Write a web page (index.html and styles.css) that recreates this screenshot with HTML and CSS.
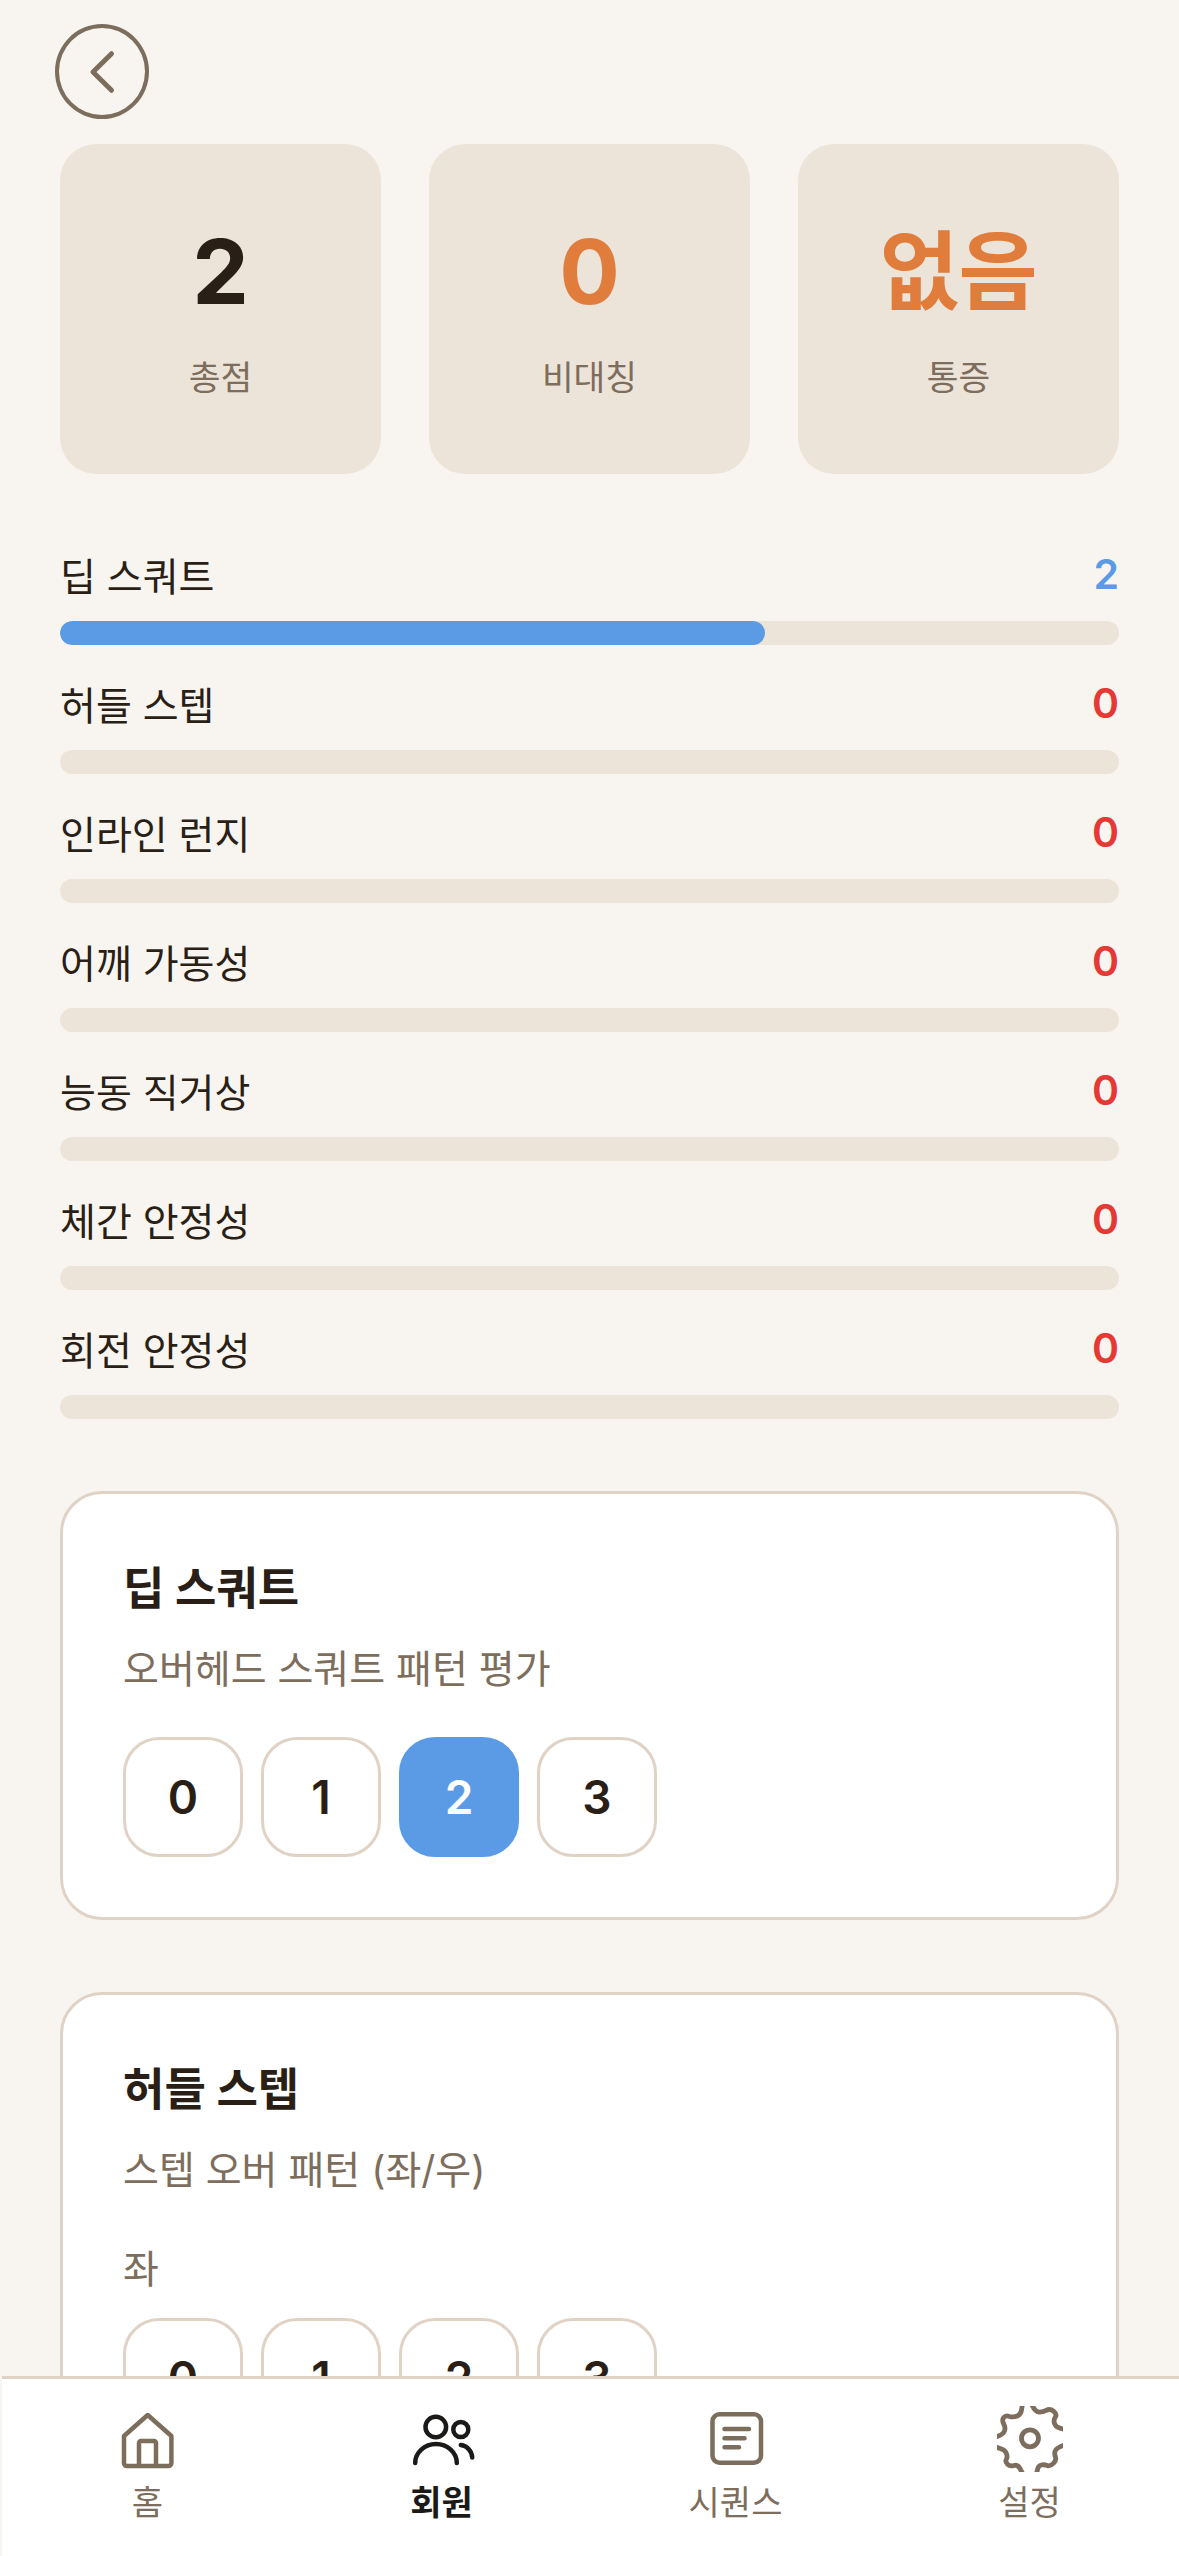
FILE: index.html
```html
<!DOCTYPE html>
<html lang="ko">
<head>
    <meta charset="UTF-8">
    <meta name="viewport" content="width=device-width, initial-scale=1.0">
    <title>FMS 평가</title>
    <link rel="stylesheet" href="styles.css">
</head>
<body>

    <div class="screen">
        <main class="content">
            <button class="back-button">
                <svg viewBox="0 0 24 24" width="60" height="60" fill="none" stroke="#7d6d5c" stroke-width="2" stroke-linecap="round" stroke-linejoin="round"><path d="M15.8 4.7L8.4 12l7.4 7.3"/></svg>
            </button>

            <div class="summary">
                <div class="summary-card">
                    <div class="summary-value">2</div>
                    <div class="summary-label">총점</div>
                </div>
                <div class="summary-card">
                    <div class="summary-value orange">0</div>
                    <div class="summary-label">비대칭</div>
                </div>
                <div class="summary-card">
                    <div class="summary-value orange korean">없음</div>
                    <div class="summary-label">통증</div>
                </div>
            </div>

            <div class="score-list">
                <div class="score-row">
                    <div class="score-head"><span>딥 스쿼트</span><span class="score-num blue">2</span></div>
                    <div class="bar"><div class="bar-fill" style="width: 66.6%"></div></div>
                </div>
                <div class="score-row">
                    <div class="score-head"><span>허들 스텝</span><span class="score-num red">0</span></div>
                    <div class="bar"></div>
                </div>
                <div class="score-row">
                    <div class="score-head"><span>인라인 런지</span><span class="score-num red">0</span></div>
                    <div class="bar"></div>
                </div>
                <div class="score-row">
                    <div class="score-head"><span>어깨 가동성</span><span class="score-num red">0</span></div>
                    <div class="bar"></div>
                </div>
                <div class="score-row">
                    <div class="score-head"><span>능동 직거상</span><span class="score-num red">0</span></div>
                    <div class="bar"></div>
                </div>
                <div class="score-row">
                    <div class="score-head"><span>체간 안정성</span><span class="score-num red">0</span></div>
                    <div class="bar"></div>
                </div>
                <div class="score-row">
                    <div class="score-head"><span>회전 안정성</span><span class="score-num red">0</span></div>
                    <div class="bar"></div>
                </div>
            </div>

            <section class="test-card">
                <h2>딥 스쿼트</h2>
                <p class="test-desc">오버헤드 스쿼트 패턴 평가</p>
                <div class="options">
                    <button class="option">0</button>
                    <button class="option">1</button>
                    <button class="option selected">2</button>
                    <button class="option">3</button>
                </div>
            </section>

            <section class="test-card">
                <h2>허들 스텝</h2>
                <p class="test-desc">스텝 오버 패턴 (좌/우)</p>
                <p class="side-label">좌</p>
                <div class="options">
                    <button class="option">0</button>
                    <button class="option">1</button>
                    <button class="option">2</button>
                    <button class="option">3</button>
                </div>
            </section>
        </main>

        <nav class="tab-bar">
            <div class="tab">
                <svg class="tab-icon" viewBox="0 0 66 66" fill="none" stroke="#7d6d5c" stroke-width="4.5" stroke-linejoin="round"><path d="M32.7 9L9 30v27a3 3 0 0 0 3 3h41.4a3 3 0 0 0 3-3V30z"/><path d="M24 60V37a2 2 0 0 1 2-2h13a2 2 0 0 1 2 2v23"/></svg>
                <span>홈</span>
            </div>
            <div class="tab active">
                <svg class="tab-icon" viewBox="0 0 66 66" fill="none" stroke="#1c1a18" stroke-width="4.5" stroke-linecap="round"><circle cx="26.8" cy="21" r="10.3"/><circle cx="51.8" cy="23.5" r="7.5"/><path d="M6.2 57A20.8 19 0 0 1 47.8 57"/><path d="M51.8 39A13 13 0 0 1 63.2 51.5"/></svg>
                <span>회원</span>
            </div>
            <div class="tab">
                <svg class="tab-icon" viewBox="0 0 66 66" fill="none" stroke="#7d6d5c" stroke-width="4.5" stroke-linecap="round"><rect x="9.5" y="8.25" width="48.5" height="48.5" rx="7"/><path d="M21.5 23H46M21.5 32.3H41.5M21.5 41.3H36"/></svg>
                <span>시퀀스</span>
            </div>
            <div class="tab">
                <svg class="tab-icon" viewBox="0 0 66 66" fill="none" stroke="#7d6d5c" stroke-width="4.8" stroke-linecap="round" stroke-linejoin="round">
                    <circle cx="33" cy="32.3" r="8.5"/>
                    <path d="M25.3-1L24.6 3.6Q24 8.3 20.2 10Q16.3 11.7 12.5 10.4Q8.7 9 6.7 11.5Q4.7 14 6.7 17.9Q8.7 21.7 7.5 25Q6.3 28.3-.3 30.7"/>
                    <path d="M-.3 41.3L3.9 42.7Q8 44 9.4 47.4Q10.7 50.7 9.4 53.2Q8 55.7 10.5 58.2Q13 60.7 16.9 59.5Q20.7 58.3 23 62.7L25.3 67"/>
                    <path d="M39.7 67L40.5 63.4Q41.3 59.7 44.3 59Q47.3 58.3 50.2 59.5Q53 60.7 56.4 57.4Q59.7 54 58.4 50.7Q57 47.3 58.4 44.5Q59.7 41.7 67.3 39"/>
                    <path d="M67.3 23.3L63 22.2Q58.7 21 57.5 17.5Q56.3 14 58.3 11.2Q60.3 8.3 56.7 5.3Q53 2.3 49.2 4.3Q45.3 6.3 41.7 6Q38 5.7 34.7-1.7"/>
                </svg>
                <span>설정</span>
            </div>
        </nav>
    </div>

</body>
</html>
```

FILE: styles.css
```css
* {
    box-sizing: border-box;
}
html, body {
    margin: 0;
    padding: 0;
}
body {
    font-family: Inter, "Noto Sans CJK KR", sans-serif;
    background-color: #f8f5f0;
    color: #2a1f16;
}
button {
    font-family: inherit;
}
.screen {
    position: relative;
    width: 1179px;
    height: 2556px;
    overflow: hidden;
}
.content {
    padding: 24px 60px 0;
}
.back-button {
    display: flex;
    align-items: center;
    justify-content: center;
    width: 94px;
    height: 95px;
    margin-left: -5px;
    padding: 0;
    background: none;
    border: 4px solid #7d6d5c;
    border-radius: 50%;
}
.summary {
    display: grid;
    grid-template-columns: repeat(3, 1fr);
    gap: 48px;
    margin-top: 25px;
}
.summary-card {
    display: flex;
    flex-direction: column;
    align-items: center;
    height: 330px;
    padding-top: 78px;
    background-color: #ede4d9;
    border-radius: 36px;
}
.summary-value {
    font-size: 90px;
    font-weight: 700;
    line-height: 100px;
}
.summary-value.korean {
    font-size: 86px;
}
.summary-label {
    margin-top: 32px;
    font-size: 34.5px;
    line-height: 48px;
    color: #7d6d5c;
}
.orange {
    color: #e07d3c;
}
.score-list {
    display: flex;
    flex-direction: column;
    gap: 11px;
    margin-top: 53px;
}
.score-head {
    display: flex;
    justify-content: space-between;
    align-items: center;
    height: 94px;
    font-size: 39px;
}
.score-num {
    font-size: 41px;
    font-weight: 600;
}
.blue {
    color: #5b9be6;
}
.red {
    color: #e53935;
}
.bar {
    height: 24px;
    background-color: #ede4d9;
    border-radius: 12px;
    overflow: hidden;
}
.bar-fill {
    height: 100%;
    background-color: #5b9be6;
    border-radius: 12px;
}
.test-card {
    margin-top: 72px;
    padding: 60px;
    background-color: #fff;
    border: 3px solid #e0d3c6;
    border-radius: 42px;
}
.test-card h2 {
    margin: 0;
    font-size: 45px;
    font-weight: 700;
    line-height: 70px;
}
.test-desc {
    margin: 18px 0 0;
    font-size: 39px;
    line-height: 54px;
    color: #7d6d5c;
}
.side-label {
    margin: 45px 0 0;
    font-size: 39px;
    line-height: 54px;
    color: #7d6d5c;
}
.options {
    display: flex;
    gap: 18px;
    margin-top: 41px;
}
.side-label + .options {
    margin-top: 22px;
}
.option {
    width: 120px;
    height: 120px;
    padding: 0;
    background-color: #fff;
    border: 3px solid #e0d3c6;
    border-radius: 36px;
    font-size: 46px;
    font-weight: 600;
    color: #2a1f16;
}
.option.selected {
    background-color: #5b9be6;
    border-color: #5b9be6;
    color: #fff;
}
.tab-bar {
    position: absolute;
    left: 2px;
    right: 0;
    top: 2376px;
    bottom: 0;
    display: grid;
    grid-template-columns: repeat(4, 294px);
    background-color: #fff;
    border-top: 3px solid #e0d3c6;
}
.tab {
    display: flex;
    flex-direction: column;
    align-items: center;
    margin-left: -3px;
    padding-top: 27px;
    font-size: 34px;
    line-height: 48px;
    color: #7d6d5c;
}
.tab-icon {
    display: block;
    width: 66px;
    height: 66px;
    margin-bottom: 7px;
}
.tab.active {
    font-weight: 700;
    color: #1c1a18;
}
```
